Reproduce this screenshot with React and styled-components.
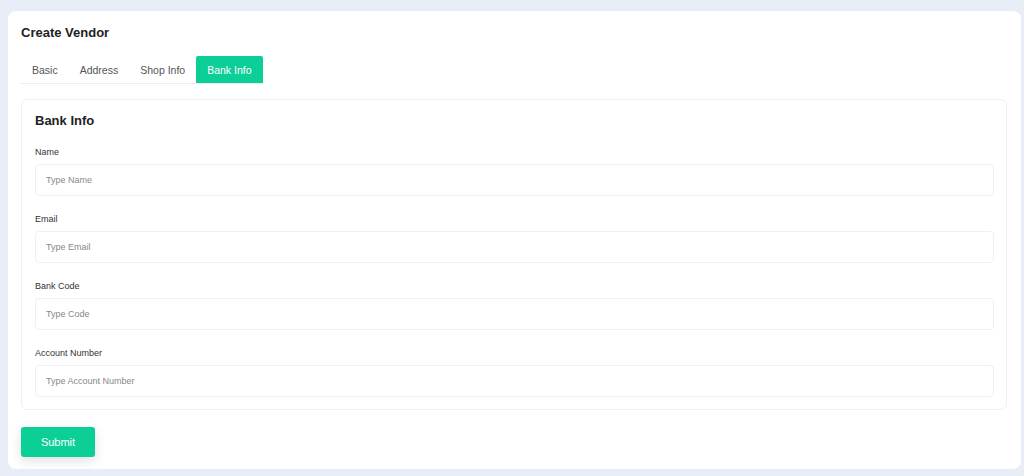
import styled, { createGlobalStyle } from 'styled-components';

const GlobalStyle = createGlobalStyle`
    body {
        margin: 0;
        background: #e9edf7;
        font-family: "Liberation Sans", Arial, sans-serif;
    }
    * { box-sizing: border-box; }
`;

const fields = [
    { label: "Name", placeholder: "Type Name" },
    { label: "Email", placeholder: "Type Email" },
    { label: "Bank Code", placeholder: "Type Code" },
    { label: "Account Number", placeholder: "Type Account Number" },
];

const tabs = ["Basic", "Address", "Shop Info", "Bank Info"];

const App = () => {
    // 현재 선택된 탭
    const activeTab = "Bank Info";

    return (
        <Page>
            <GlobalStyle />
            <Card>
                <Title>Create Vendor</Title>

                <TabBar>
                    {tabs.map((t) => (
                        <Tab key={t} $active={t === activeTab}>{t}</Tab>
                    ))}
                </TabBar>

                <Section>
                    <SectionTitle>Bank Info</SectionTitle>
                    {fields.map((f) => (
                        <FieldGroup key={f.label}>
                            <Label>{f.label}</Label>
                            <Input placeholder={f.placeholder} />
                        </FieldGroup>
                    ))}
                </Section>

                <SubmitButton>Submit</SubmitButton>
            </Card>
        </Page>
    );
};
export default App;

const Page = styled.div`
    padding: 11px 3px 7px 8px;
`;
const Card = styled.div`
    background: #fff;
    border-radius: 8px;
    height: 458px;
    padding: 14px 14px 0 13px;
`;
const Title = styled.h1`
    margin: 0;
    font-size: 13px;
    line-height: 16px;
    font-weight: 700;
    color: #222;
`;
const TabBar = styled.div`
    display: inline-flex;
    margin-top: 15px;
    padding-right: 1px;
    border-bottom: 1px solid #eeeeee;
`;
const Tab = styled.button`
    border: none;
    font-family: inherit;
    font-size: 10.5px;
    height: 27px;
    padding: 0 11px;
    border-radius: 2px 2px 0 0;
    cursor: pointer;
    background: ${(p) => (p.$active ? "#0ccf98" : "transparent")};
    color: ${(p) => (p.$active ? "#fff" : "#555")};
`;
const Section = styled.div`
    margin-top: 15px;
    border: 1px solid #eef0f3;
    border-radius: 6px;
    padding: 13px 12px 12px 13px;
`;
const SectionTitle = styled.h2`
    margin: 0 0 18px;
    font-size: 13px;
    line-height: 16px;
    font-weight: 700;
    color: #222;
`;
const FieldGroup = styled.div`
    display: flex;
    flex-direction: column;
    gap: 6px;
    margin-bottom: 18px;
    &:last-child {
        margin-bottom: 0;
    }
`;
const Label = styled.label`
    font-size: 9px;
    line-height: 11px;
    color: #333;
`;
const Input = styled.input`
    height: 32px;
    border: 1px solid #eef0f3;
    border-radius: 4px;
    padding: 0 10px;
    font-family: inherit;
    font-size: 9px;
    color: #333;
    outline: none;
    &::placeholder {
        color: #888;
    }
`;
const SubmitButton = styled.button`
    margin-top: 17px;
    width: 74px;
    height: 30px;
    border: none;
    border-radius: 3px;
    background: #0ccf98;
    color: #fff;
    font-family: inherit;
    font-size: 11px;
    box-shadow: 0 4px 12px rgba(0, 0, 0, 0.12);
    cursor: pointer;
`;
